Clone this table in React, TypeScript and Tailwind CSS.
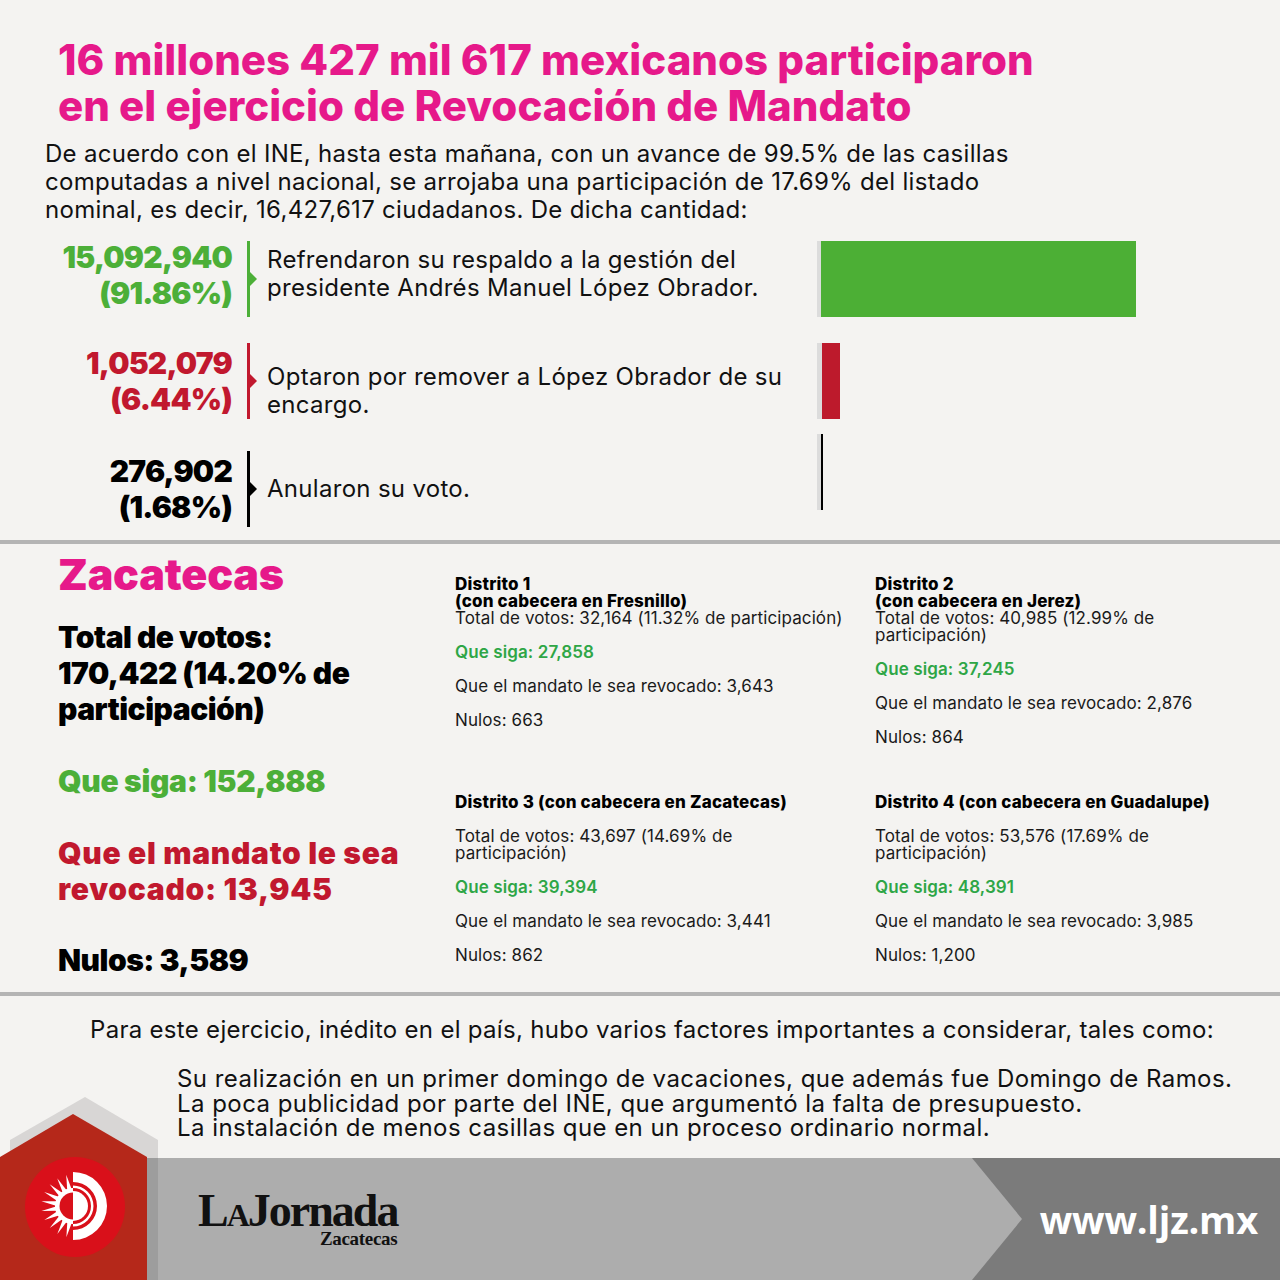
import React from "react";

const font = { fontFamily: "Inter, 'Noto Sans', sans-serif" };

function Bracket({ fill, bg }: { fill: string; bg: string }) {
  return (
    <div className="relative h-[76px] w-[10px] shrink-0">
      <div className={`absolute left-0 top-0 h-full w-[3px] ${bg}`} />
      <svg className="absolute left-[3px] top-[31px]" width="7" height="14" viewBox="0 0 7 14">
        <path d="M0 0 L7 7 L0 14 Z" fill={fill} />
      </svg>
    </div>
  );
}

function SunLogo() {
  const cx = 48;
  const cy = 49;
  const rays: string[] = [];
  for (let i = 0; i < 10; i++) {
    const a = ((102 + i * 17.3) * Math.PI) / 180;
    const da = (7.5 * Math.PI) / 180;
    const p1 = [cx + 17 * Math.cos(a - da), cy + 17 * Math.sin(a - da)];
    const p2 = [cx + 32 * Math.cos(a), cy + 32 * Math.sin(a)];
    const p3 = [cx + 17 * Math.cos(a + da), cy + 17 * Math.sin(a + da)];
    rays.push(`M${p1[0]} ${p1[1]} L${p2[0]} ${p2[1]} L${p3[0]} ${p3[1]} Z`);
  }
  return (
    <svg width="100" height="100" viewBox="0 0 100 100">
      <circle cx="50" cy="50" r="50" fill="#d9101a" />
      {rays.map((d, i) => (
        <path key={i} d={d} fill="#fff" />
      ))}
      <path d={`M${cx} ${cy - 18} A18 18 0 0 0 ${cx} ${cy + 18} Z`} fill="#fff" />
      <circle cx={cx} cy={cy} r="13.5" fill="#d9101a" />
      <path d={`M${cx} ${cy - 15} A15 15 0 0 1 ${cx} ${cy + 15} Z`} fill="#fff" />
      <path d={`M${cx} ${cy - 20.5} A20.5 20.5 0 0 1 ${cx} ${cy + 20.5} L${cx} ${cy + 18} A18 18 0 0 0 ${cx} ${cy - 18} Z`} fill="#fff" />
      <path d={`M${cx} ${cy - 34} A34 34 0 0 1 ${cx} ${cy + 34} L${cx} ${cy + 24} A24 24 0 0 0 ${cx} ${cy - 24} Z`} fill="#fff" />
    </svg>
  );
}

function District({
  title,
  total,
  siga,
  revocado,
  nulos,
  spaced,
}: {
  title: React.ReactNode;
  total: React.ReactNode;
  siga: string;
  revocado: string;
  nulos: string;
  spaced?: boolean;
}) {
  return (
    <div className="text-[17px] leading-[17px] tracking-[0.1px] text-[#1a1a1a]">
      <div className={`text-[17px] font-extrabold leading-[17px] tracking-[0.2px] text-black ${spaced ? "mb-[17px]" : ""}`}>{title}</div>
      <div>{total}</div>
      <div className="mt-[17px] font-semibold text-[#2ea646]">Que siga: {siga}</div>
      <div className="mt-[17px]">Que el mandato le sea revocado: {revocado}</div>
      <div className="mt-[17px]">Nulos: {nulos}</div>
    </div>
  );
}

export default function App() {
  return (
    <div style={font} className="relative flex h-[1280px] w-[1280px] flex-col overflow-hidden bg-[#f4f3f1] text-[#111]">
      {/* header */}
      <div className="px-[58px] pt-[37px]">
        <h1 className="whitespace-nowrap text-[42px] font-extrabold leading-[46px] text-[#e6198a]">
          16 millones 427 mil 617 mexicanos participaron
          <br />
          en el ejercicio de Revocación de Mandato
        </h1>
      </div>
      <p className="ml-[45px] mt-[11px] whitespace-nowrap text-[24px] leading-[28px] tracking-[0.3px]">
        De acuerdo con el INE, hasta esta mañana, con un avance de 99.5% de las casillas
        <br />
        computadas a nivel nacional, se arrojaba una participación de 17.69% del listado
        <br />
        nominal, es decir, 16,427,617 ciudadanos. De dicha cantidad:
      </p>

      {/* national results */}
      <div className="ml-[45px] mt-[17px] flex flex-col">
        <div className="flex items-center">
          <div className="-mt-[8px] w-[187px] text-right text-[30px] font-black leading-[36px] tracking-[-0.8px] text-[#4caf38]">
            15,092,940
            <br />
            (91.86%)
          </div>
          <div className="ml-[15px]">
            <Bracket bg="bg-[#4caf38]" fill="#4caf38" />
          </div>
          <div className="-mt-[10px] ml-[10px] w-[550px] text-[24px] leading-[28px] tracking-[0.3px]">
            Refrendaron su respaldo a la gestión del
            <br />
            presidente Andrés Manuel López Obrador.
          </div>
          <div className="flex h-[76px]">
            <div className="w-[4px] bg-[#dcdcdc]" />
            <div className="w-[315px] bg-[#4caf35]" />
          </div>
        </div>

        <div className="mt-[26px] flex items-center">
          <div className="w-[187px] text-right text-[30px] font-black leading-[36px] tracking-[-0.8px] text-[#c1182e]">
            1,052,079
            <br />
            (6.44%)
          </div>
          <div className="ml-[15px]">
            <Bracket bg="bg-[#c1182e]" fill="#c1182e" />
          </div>
          <div className="ml-[10px] mt-[20px] w-[550px] text-[24px] leading-[28px] tracking-[0.3px]">
            Optaron por remover a López Obrador de su
            <br />
            encargo.
          </div>
          <div className="flex h-[76px]">
            <div className="w-[5px] bg-[#dcdcdc]" />
            <div className="w-[18px] bg-[#bd1a2c]" />
          </div>
        </div>

        <div className="mt-[32px] flex items-center">
          <div className="w-[187px] text-right text-[30px] font-black leading-[36px] tracking-[-0.8px] text-black">
            276,902
            <br />
            (1.68%)
          </div>
          <div className="ml-[15px]">
            <Bracket bg="bg-black" fill="#000" />
          </div>
          <div className="ml-[10px] w-[550px] text-[24px] leading-[28px] tracking-[0.3px]">Anularon su voto.</div>
          <div className="-mt-[34px] flex h-[76px]">
            <div className="w-[4px] bg-[#dcdcdc]" />
            <div className="w-[2px] bg-black" />
          </div>
        </div>
      </div>

      <div className="mt-[13px] h-[4px] w-full bg-[#b4b4b4]" />

      {/* Zacatecas */}
      <div className="grid h-[448px] grid-cols-[397px_420px_1fr] pl-[58px]">
        <div className="pt-[5px]">
          <div className="text-[43px] font-black leading-[50px] tracking-[-0.2px] text-[#e6198a]">Zacatecas</div>
          <div className="mt-[20px] text-[30px] font-black leading-[36px] tracking-[-0.5px] text-black">
            Total de votos:
            <br />
            170,422 (14.20% de
            <br />
            participación)
          </div>
          <div className="mt-[36px] text-[30px] font-black leading-[36px] tracking-[-0.3px] text-[#4caf38]">Que siga: 152,888</div>
          <div className="mt-[36px] text-[30px] font-black leading-[36px] tracking-[0.7px] text-[#c1182e]">
            Que el mandato le sea
            <br />
            revocado: 13,945
          </div>
          <div className="mt-[35px] text-[30px] font-black leading-[36px] tracking-[-0.5px] text-black">Nulos: 3,589</div>
        </div>

        <div className="grid grid-rows-[218px_auto] pt-[32px]">
          <District
            title={
              <>
                Distrito 1
                <br />
                (con cabecera en Fresnillo)
              </>
            }
            total="Total de votos: 32,164 (11.32% de participación)"
            siga="27,858"
            revocado="3,643"
            nulos="663"
          />
          <District
            spaced
            title="Distrito 3 (con cabecera en Zacatecas)"
            total={
              <>
                Total de votos: 43,697 (14.69% de
                <br />
                participación)
              </>
            }
            siga="39,394"
            revocado="3,441"
            nulos="862"
          />
        </div>

        <div className="grid grid-rows-[218px_auto] pt-[32px]">
          <District
            title={
              <>
                Distrito 2
                <br />
                (con cabecera en Jerez)
              </>
            }
            total={
              <>
                Total de votos: 40,985 (12.99% de
                <br />
                participación)
              </>
            }
            siga="37,245"
            revocado="2,876"
            nulos="864"
          />
          <District
            spaced
            title="Distrito 4 (con cabecera en Guadalupe)"
            total={
              <>
                Total de votos: 53,576 (17.69% de
                <br />
                participación)
              </>
            }
            siga="48,391"
            revocado="3,985"
            nulos="1,200"
          />
        </div>
      </div>

      <div className="h-[4px] w-full bg-[#b4b4b4]" />

      {/* factors */}
      <div className="whitespace-nowrap text-[24px] tracking-[0.3px]">
        <p className="ml-[90px] mt-[20px] leading-[28px]">
          Para este ejercicio, inédito en el país, hubo varios factores importantes a considerar, tales como:
        </p>
        <div className="ml-[177px] mt-[23px] leading-[24.5px] tracking-[0.45px]">
          <p>Su realización en un primer domingo de vacaciones, que además fue Domingo de Ramos.</p>
          <p>La poca publicidad por parte del INE, que argumentó la falta de presupuesto.</p>
          <p>La instalación de menos casillas que en un proceso ordinario normal.</p>
        </div>
      </div>

      {/* footer band */}
      <div className="mt-auto flex h-[122px] w-full">
        <div className="flex flex-1 items-center bg-[#adadad] pl-[198px]">
          <div className="flex flex-col items-end" style={{ fontFamily: "'Liberation Serif', serif" }}>
            <div className="text-[46px] font-bold leading-[40px] tracking-[-2px] text-[#111]">
              <span className="[font-variant:small-caps]">La</span>Jornada
            </div>
            <div className="-mt-[1px] text-[19px] font-bold leading-[18px] tracking-[-0.3px] text-[#111]">Zacatecas</div>
          </div>
        </div>
        <div className="relative flex w-[308px] items-center justify-end bg-[#7b7b7b] pr-[22px]">
          <svg className="absolute left-0 top-0" width="51" height="122" viewBox="0 0 51 122">
            <path d="M0 0 L50 61 L0 122 Z" fill="#adadad" />
          </svg>
          <span className="relative text-[38px] font-bold tracking-[-0.2px] text-white" style={{ fontFamily: "'Open Sans', sans-serif" }}>
            www.ljz.mx
          </span>
        </div>
      </div>

      {/* house logo */}
      <svg className="absolute bottom-0 left-0" width="160" height="185" viewBox="0 0 160 185">
        <path d="M10 45 L85 2 L158 45 L158 185 L10 185 Z" fill="#d8d6d5" />
        <rect x="147" y="63" width="11" height="122" fill="#9d9d9d" />
        <path d="M0 62 L73 19 L147 62 L147 185 L0 185 Z" fill="#b5281a" />
      </svg>
      <div className="absolute bottom-[23px] left-[25px]">
        <SunLogo />
      </div>
    </div>
  );
}
